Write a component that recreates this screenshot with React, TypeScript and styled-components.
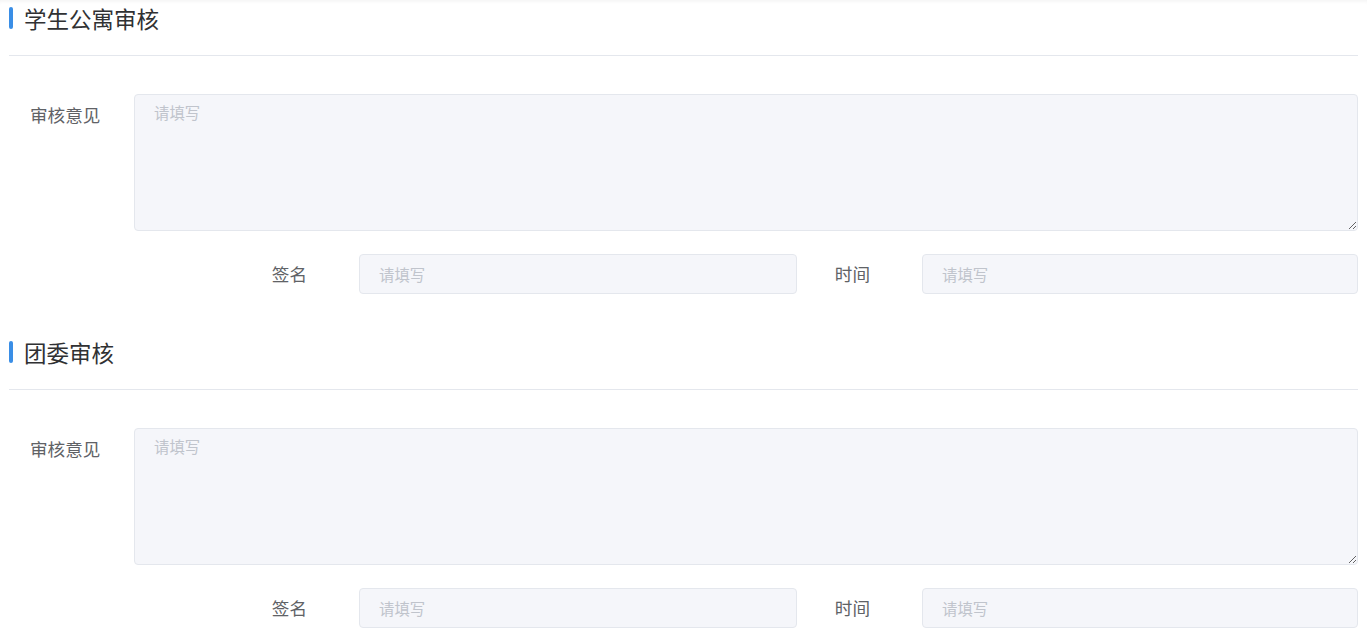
import styled, { createGlobalStyle } from "styled-components";

const GlobalStyle = createGlobalStyle`
  html, body {
    margin: 0;
    padding: 0;
    background: #fff;
    font-family: "Noto Sans CJK SC", "Noto Sans", sans-serif;
  }
  * {
    box-sizing: border-box;
  }
`;

const Page = styled.div`
  padding: 0 9px;
  box-shadow: inset 0 4px 4px -3px rgba(0, 0, 0, 0.06);
`;

const Section = styled.section`
  padding-bottom: 40px;
  &:last-child {
    padding-bottom: 12px;
  }
`;

const Header = styled.div`
  display: flex;
  align-items: flex-start;
  gap: 11px;
  padding-top: 7px;
  height: 56px;
  border-bottom: 1px solid #e4e7ed;
`;

const Bar = styled.span`
  width: 4px;
  height: 22px;
  border-radius: 2px;
  background: #3a8ee6;
  flex-shrink: 0;
`;

const Title = styled.h2`
  margin: 0;
  font-size: 22.5px;
  line-height: 22px;
  font-weight: 400;
  color: #303133;
`;

const OpinionRow = styled.div`
  display: grid;
  grid-template-columns: 125px 1fr;
  margin-top: 38px;
`;

const Label = styled.label<{ $align?: "left" | "right" }>`
  font-size: 17.6px;
  line-height: 24px;
  color: #606266;
  text-align: ${(p) => p.$align || "left"};
`;

const OpinionLabel = styled(Label)`
  padding: 9px 0 0 21px;
`;

const TextArea = styled.textarea`
  display: block;
  width: 100%;
  height: 137px;
  margin: 0;
  padding: 6px 19px;
  border: 1px solid #e4e7ed;
  border-radius: 4px;
  background: #f5f6fa;
  font-family: inherit;
  font-size: 15.4px;
  line-height: 22px;
  color: #606266;
  outline: none;
  &::placeholder {
    color: #c0c4cc;
  }
`;

const SignRow = styled.div`
  display: grid;
  grid-template-columns: 350px 438px 125px 1fr;
  align-items: center;
  margin-top: 23px;
`;

const SignLabel = styled(Label)`
  padding-right: 52px;
`;

const Input = styled.input`
  display: block;
  width: 100%;
  height: 40px;
  margin: 0;
  padding: 0 19px;
  border: 1px solid #e4e7ed;
  border-radius: 4px;
  background: #f5f6fa;
  font-family: inherit;
  font-size: 15.4px;
  color: #606266;
  outline: none;
  &::placeholder {
    color: #c0c4cc;
  }
`;

const sections = ["学生公寓审核", "团委审核"];

const ReviewSection = ({ title }: { title: string }) => (
  <Section>
    <Header>
      <Bar />
      <Title>{title}</Title>
    </Header>
    <OpinionRow>
      <OpinionLabel>审核意见</OpinionLabel>
      <TextArea placeholder="请填写" />
    </OpinionRow>
    <SignRow>
      <SignLabel $align="right">签名</SignLabel>
      <Input placeholder="请填写" />
      <SignLabel $align="right">时间</SignLabel>
      <Input placeholder="请填写" />
    </SignRow>
  </Section>
);

export default function App() {
  return (
    <>
      <GlobalStyle />
      <Page>
        {sections.map((s) => (
          <ReviewSection key={s} title={s} />
        ))}
      </Page>
    </>
  );
}
